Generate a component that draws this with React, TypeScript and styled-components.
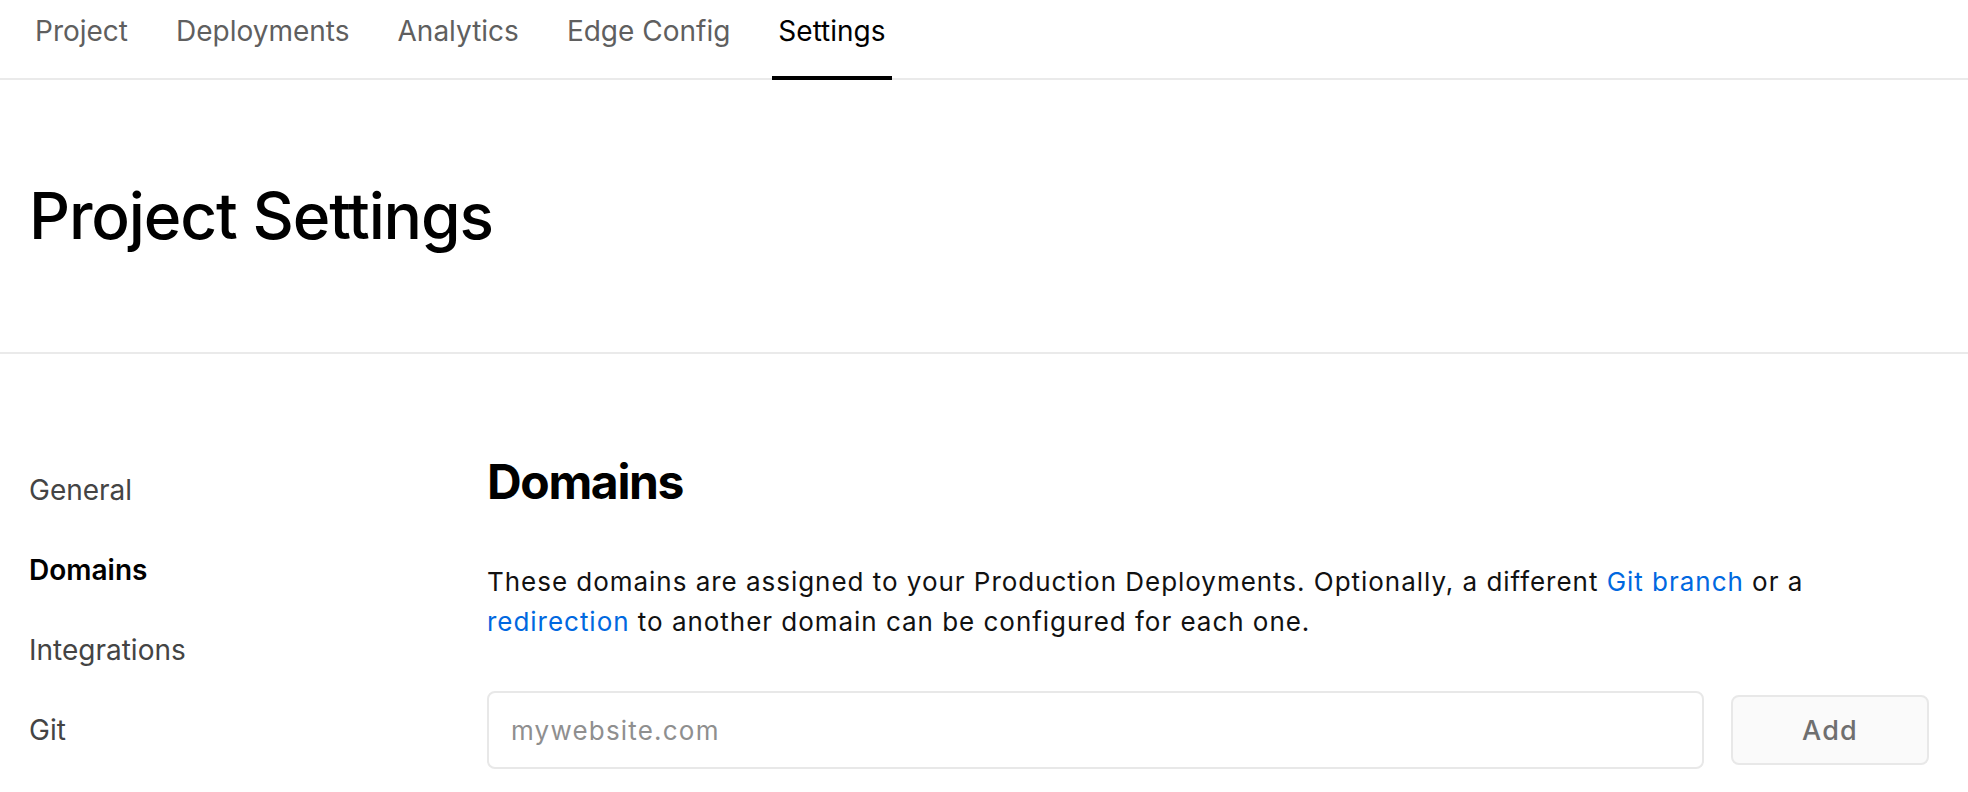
import React from "react";
import styled, { createGlobalStyle } from "styled-components";

const GlobalStyle = createGlobalStyle`
  html, body {
    margin: 0;
    padding: 0;
    background: #ffffff;
  }
  body {
    font-family: Inter, "Noto Sans", "Liberation Sans", sans-serif;
    color: #000;
    -webkit-font-smoothing: antialiased;
  }
  * { box-sizing: border-box; }
`;

const TopNav = styled.nav`
  display: flex;
  gap: 36px;
  height: 80px;
  padding: 0 29px;
  border-bottom: 2px solid #eaeaea;
`;

const Tab = styled.a<{ $active?: boolean }>`
  position: relative;
  display: block;
  padding: 11px 6px 0;
  font-size: 28px;
  line-height: 40px;
  color: ${(p) => (p.$active ? "#000" : "#5f5f5f")};
  text-decoration: none;
  white-space: nowrap;

  &::after {
    content: "";
    position: absolute;
    left: 0;
    right: 0;
    bottom: -2px;
    height: 4px;
    background: ${(p) => (p.$active ? "#000" : "transparent")};
  }
`;

const Header = styled.header`
  padding: 96px 29px;
  border-bottom: 2px solid #eaeaea;
`;

const Title = styled.h1`
  margin: 0;
  font-size: 64px;
  line-height: 80px;
  font-weight: 500;
  letter-spacing: -0.018em;
`;

const Body = styled.div`
  display: grid;
  grid-template-columns: 458px 1fr;
  padding: 96px 39px 0 29px;
`;

const SideNav = styled.nav`
  display: flex;
  flex-direction: column;
`;

const SideItem = styled.a<{ $active?: boolean }>`
  font-size: 28px;
  line-height: 80px;
  color: ${(p) => (p.$active ? "#000" : "#444")};
  font-weight: ${(p) => (p.$active ? 600 : 400)};
  text-decoration: none;
`;

const Content = styled.section`
  display: flex;
  flex-direction: column;
`;

const SectionTitle = styled.h2`
  margin: 0;
  font-size: 48px;
  line-height: 64px;
  font-weight: 700;
  letter-spacing: -0.028em;
`;

const Description = styled.p`
  margin: 48px 0 0;
  font-size: 26px;
  line-height: 40px;
  letter-spacing: 0.97px;
  color: #111;
`;

const TextLink = styled.a`
  color: #0068e0;
  text-decoration: none;
`;

const AddRow = styled.div`
  display: flex;
  align-items: center;
  gap: 27px;
  margin-top: 49px;
`;

const DomainInput = styled.input`
  flex: 1;
  height: 78px;
  border: 2px solid #e8e8e8;
  border-radius: 8px;
  padding: 0 22px;
  font-family: inherit;
  font-size: 26px;
  letter-spacing: 1.2px;
  color: #111;
  background: #fff;
  outline: none;

  &::placeholder {
    color: #8f8f8f;
  }
`;

const AddButton = styled.button`
  width: 198px;
  height: 70px;
  border: 2px solid #e8e8e8;
  border-radius: 8px;
  background: #fafafa;
  color: #6f6f6f;
  font-family: inherit;
  font-size: 27px;
  font-weight: 500;
  letter-spacing: 1.2px;
  cursor: not-allowed;
`;

const tabs = ["Project", "Deployments", "Analytics", "Edge Config", "Settings"];
const sideItems = ["General", "Domains", "Integrations", "Git"];

export default function App() {
  return (
    <>
      <GlobalStyle />
      <TopNav>
        {tabs.map((t) => (
          <Tab key={t} href="#" $active={t === "Settings"}>
            {t}
          </Tab>
        ))}
      </TopNav>
      <Header>
        <Title>Project Settings</Title>
      </Header>
      <Body>
        <SideNav>
          {sideItems.map((s) => (
            <SideItem key={s} href="#" $active={s === "Domains"}>
              {s}
            </SideItem>
          ))}
        </SideNav>
        <Content>
          <SectionTitle>Domains</SectionTitle>
          <Description>
            These domains are assigned to your Production Deployments. Optionally, a different{" "}
            <TextLink href="#">Git branch</TextLink> or a <TextLink href="#">redirection</TextLink> to
            another domain can be configured for each one.
          </Description>
          <AddRow>
            <DomainInput placeholder="mywebsite.com" />
            <AddButton>Add</AddButton>
          </AddRow>
        </Content>
      </Body>
    </>
  );
}
